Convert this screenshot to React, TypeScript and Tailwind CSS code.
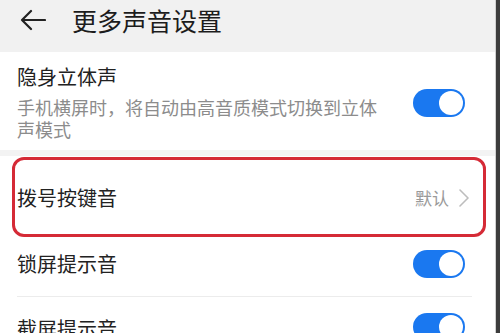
import React from 'react'

const font = { fontFamily: '"Noto Sans CJK SC", "Noto Sans", sans-serif' }

function Toggle() {
  return (
    <div className="w-[52px] h-[28px] shrink-0 rounded-full bg-[#1a78f0] flex items-center justify-end pr-[2px]">
      <div className="w-[24px] h-[24px] rounded-full bg-white" />
    </div>
  )
}

export default function App() {
  return (
    <div className="w-[500px] h-[333px] overflow-hidden flex bg-white" style={font}>
      <div className="flex-1 flex flex-col">
        {/* header */}
        <div className="h-[52px] shrink-0 bg-[#f1f1f1] flex items-start pt-[8px] pl-[20px]">
          <div className="h-[24px] flex items-center">
            <svg width="26" height="22" viewBox="0 0 26 22" fill="none" stroke="#222" strokeWidth="2.2" strokeLinecap="round" strokeLinejoin="round">
              <path d="M25 11H2M11 2L2 11l9 9" />
            </svg>
          </div>
          <div className="ml-[26px] text-[25px] leading-[25px] text-[#1c1c1c]">更多声音设置</div>
        </div>

        {/* row 1 */}
        <div className="h-[98px] shrink-0 flex items-start pl-[17px] pr-[30px] pt-[13px]">
          <div className="flex-1">
            <div className="text-[20px] leading-[24px] text-[#222]">隐身立体声</div>
            <div className="mt-[7px] w-[364px] text-[18px] leading-[22px] text-[#8c8c8c]">手机横屏时，将自动由高音质模式切换到立体声模式</div>
          </div>
          <div className="mt-[24px]">
            <Toggle />
          </div>
        </div>

        <div className="h-[6px] shrink-0 bg-[#f3f3f3]" />

        {/* row 2 */}
        <div className="relative h-[84px] shrink-0 flex items-center pl-[17px] pr-[26px]">
          <div className="flex-1 text-[20px] leading-[24px] text-[#222]">拨号按键音</div>
          <div className="text-[17px] text-[#9a9a9a]">默认</div>
          <svg className="ml-[10px]" width="10" height="18" viewBox="0 0 10 18" fill="none" stroke="#bdbdbd" strokeWidth="1.6" strokeLinecap="round" strokeLinejoin="round">
            <path d="M1 1l8 8-8 8" />
          </svg>
          <div className="absolute left-[12px] right-[9px] top-[1px] h-[80px] border-[3px] border-[#d52a36] rounded-[12px]" />
        </div>

        {/* row 3 */}
        <div className="h-[56px] shrink-0 flex items-center pb-[8px] pl-[17px] pr-[30px]">
          <div className="flex-1 text-[20px] leading-[24px] text-[#222]">锁屏提示音</div>
          <Toggle />
        </div>
        <div className="h-px shrink-0 bg-[#ececec] ml-[17px] mr-[23px]" />

        {/* row 4 */}
        <div className="h-[64px] shrink-0 flex items-start pt-[16px] pl-[17px] pr-[30px]">
          <div className="flex-1 text-[20px] leading-[24px] text-[#222] mt-[4px]">截屏提示音</div>
          <Toggle />
        </div>
      </div>
      <div className="w-[1px] bg-[#d0d0d0]" />
      <div className="w-[4px] bg-[#3d3d3d]" />
    </div>
  )
}
